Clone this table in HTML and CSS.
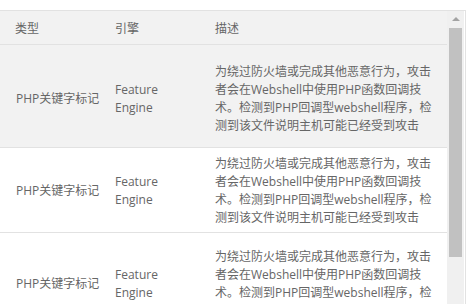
FILE: index.html
```html
<!DOCTYPE html>
<html lang="zh-CN">
<head>
<meta charset="utf-8">
<link rel="stylesheet" href="styles.css">
</head>
<body>
<div class="grid">
  <div class="table">
    <div class="row head">
      <div class="cell">类型</div>
      <div class="cell">引擎</div>
      <div class="cell">描述</div>
    </div>
    <div class="row body hover r1">
      <div class="cell type">PHP关键字标记</div>
      <div class="cell">Feature Engine</div>
      <div class="cell desc">为绕过防火墙或完成其他恶意行为，攻击者会在Webshell中使用PHP函数回调技术。检测到PHP回调型webshell程序，检测到该文件说明主机可能已经受到攻击</div>
    </div>
    <div class="row body r2">
      <div class="cell type">PHP关键字标记</div>
      <div class="cell">Feature Engine</div>
      <div class="cell desc">为绕过防火墙或完成其他恶意行为，攻击者会在Webshell中使用PHP函数回调技术。检测到PHP回调型webshell程序，检测到该文件说明主机可能已经受到攻击</div>
    </div>
    <div class="row body r3">
      <div class="cell type">PHP关键字标记</div>
      <div class="cell">Feature Engine</div>
      <div class="cell desc">为绕过防火墙或完成其他恶意行为，攻击者会在Webshell中使用PHP函数回调技术。检测到PHP回调型webshell程序，检测到该文件说明主机可能已经受到攻击</div>
    </div>
  </div>
  <div class="scrollbar">
    <div class="arrow"></div>
    <div class="thumb"></div>
  </div>
</div>
</body>
</html>
```
FILE: styles.css
```css
html, body {
  margin: 0;
  padding: 0;
  background: #fff;
}
body {
  padding-top: 10px;
  font-family: "Open Sans", "Noto Sans CJK SC", sans-serif;
  font-size: 12px;
  line-height: 18px;
  color: #666;
}
.grid {
  width: 465px;
  height: 293px;
  border-top: 1px solid #e2e2e2;
  border-right: 1px solid #e2e2e2;
  display: flex;
  overflow: hidden;
}
.table {
  width: 447px;
  flex: none;
}
.row {
  display: grid;
  grid-template-columns: 100px 100px 247px;
  align-items: center;
  border-bottom: 1px solid #e2e2e2;
}
.cell {
  padding: 0 15px;
}
.type {
  padding-left: 16px;
  padding-right: 0;
  white-space: nowrap;
}
.desc {
  padding-right: 9px;
}
.head {
  height: 33px;
  background: #f2f2f2;
}
.head .cell {
  padding-top: 3px;
}
.hover {
  background: #f2f2f2;
}
.r1 { padding: 18px 0 12px; }
.r2 { padding: 7px 0 5px; }
.r3 { padding: 15px 0 12px; }
.scrollbar {
  width: 17px;
  flex: none;
  background: #f0f0f0;
  display: flex;
  flex-direction: column;
  align-items: center;
}
.arrow {
  margin-top: 6px;
  width: 0;
  height: 0;
  border-left: 4px solid transparent;
  border-right: 4px solid transparent;
  border-bottom: 4px solid #a3a3a3;
}
.thumb {
  margin-top: 7px;
  width: 13px;
  height: 229px;
  background: #c1c1c1;
}
```
